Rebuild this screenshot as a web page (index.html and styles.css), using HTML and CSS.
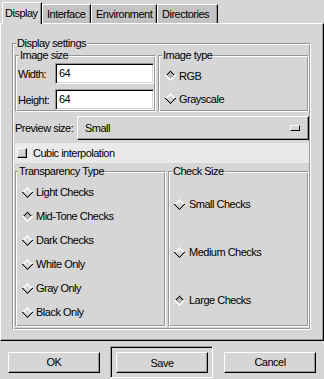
FILE: index.html
```html
<!DOCTYPE html>
<html lang="en">
<head>
    <meta charset="UTF-8">
    <title>Preferences</title>
    <link rel="stylesheet" href="styles.css">
</head>
<body>
    <svg class="defs" width="0" height="0" aria-hidden="true">
        <symbol id="dia-off" viewBox="0 0 11 11">
            <polygon points="5.5,1 10,5.5 5.5,10 1,5.5" fill="#d6d6d6"/>
            <path d="M0.5 5.5 L5.5 0.5 L10.5 5.5" stroke="#fff" fill="none"/>
            <path d="M1.5 5.5 L5.5 1.5 L9.5 5.5" stroke="#fff" fill="none"/>
            <path d="M1.5 5.5 L5.5 9.5 L9.5 5.5" stroke="#969696" fill="none"/>
            <path d="M0.5 5.5 L5.5 10.5 L10.5 5.5" stroke="#000" fill="none"/>
        </symbol>
        <symbol id="dia-on" viewBox="0 0 11 11">
            <polygon points="5.5,1 10,5.5 5.5,10 1,5.5" fill="#b4b4b4"/>
            <path d="M0.5 5.5 L5.5 0.5 L10.5 5.5" stroke="#969696" fill="none"/>
            <path d="M1.5 5.5 L5.5 1.5 L9.5 5.5" stroke="#000" fill="none"/>
            <path d="M1.5 5.5 L5.5 9.5 L9.5 5.5" stroke="#fff" fill="none"/>
            <path d="M0.5 5.5 L5.5 10.5 L10.5 5.5" stroke="#fff" fill="none"/>
        </symbol>
    </svg>

    <div class="tabs">
        <div class="tab active tab-display">Display</div>
        <div class="tab tab-interface">Interface</div>
        <div class="tab tab-environment">Environment</div>
        <div class="tab tab-directories">Directories</div>
    </div>

    <div class="page">
        <fieldset class="frame settings">
            <legend>Display settings</legend>

            <div class="row-top">
                <fieldset class="frame image-size">
                    <legend>Image size</legend>
                    <div class="size-grid">
                        <span>Width:</span>
                        <span class="entry">64</span>
                        <span>Height:</span>
                        <span class="entry">64</span>
                    </div>
                </fieldset>
                <fieldset class="frame image-type">
                    <legend>Image type</legend>
                    <div class="opt"><svg class="dia"><use href="#dia-on"/></svg>RGB</div>
                    <div class="opt"><svg class="dia"><use href="#dia-off"/></svg>Grayscale</div>
                </fieldset>
            </div>

            <div class="preview">
                <span class="preview-label">Preview size:</span>
                <div class="combo">
                    <span>Small</span>
                    <span class="combo-mark"></span>
                </div>
            </div>

            <div class="cubic">
                <span class="check"></span>
                <span>Cubic interpolation</span>
            </div>

            <div class="row-bottom">
                <fieldset class="frame transparency">
                    <legend>Transparency Type</legend>
                    <div class="opt"><svg class="dia"><use href="#dia-off"/></svg>Light Checks</div>
                    <div class="opt"><svg class="dia"><use href="#dia-on"/></svg>Mid-Tone Checks</div>
                    <div class="opt"><svg class="dia"><use href="#dia-off"/></svg>Dark Checks</div>
                    <div class="opt"><svg class="dia"><use href="#dia-off"/></svg>White Only</div>
                    <div class="opt"><svg class="dia"><use href="#dia-off"/></svg>Gray Only</div>
                    <div class="opt"><svg class="dia"><use href="#dia-off"/></svg>Black Only</div>
                </fieldset>
                <fieldset class="frame check-size">
                    <legend>Check Size</legend>
                    <div class="opt"><svg class="dia"><use href="#dia-off"/></svg>Small Checks</div>
                    <div class="opt"><svg class="dia"><use href="#dia-off"/></svg>Medium Checks</div>
                    <div class="opt"><svg class="dia"><use href="#dia-on"/></svg>Large Checks</div>
                </fieldset>
            </div>
        </fieldset>
    </div>

    <div class="actions">
        <button class="btn btn-ok">OK</button>
        <div class="default">
            <button class="btn">Save</button>
        </div>
        <button class="btn">Cancel</button>
    </div>
</body>
</html>
```

FILE: styles.css
```css
/* GTK 1.x look: #d6d6d6 face, white light, #969696 dark */
body {
    margin: 0;
    width: 324px;
    height: 379px;
    overflow: hidden;
    background: #d6d6d6;
    color: #000;
    font-family: "Liberation Sans", Arial, sans-serif;
    font-size: 11px;
    letter-spacing: -0.5px;
    line-height: 14px;
}

.defs {
    position: absolute;
}

/* Notebook tabs */
.tabs {
    display: flex;
    align-items: flex-end;
    height: 23px;
    padding-left: 2px;
    box-sizing: border-box;
    position: relative;
    z-index: 1;
}

.tab {
    box-sizing: border-box;
    height: 19px;
    padding: 2px 0 0 4px;
    background: #c3c3c3;
    border-left: 1px solid #fff;
    border-top: 1px solid #fff;
    border-right: 1px solid #000;
    box-shadow: inset -1px 0 #969696;
    white-space: nowrap;
}

.tab.active {
    height: 22px;
    margin-bottom: -1px;
    padding-top: 3px;
    padding-left: 2px;
    background: #d6d6d6;
}

.tab-display { width: 40px; }
.tab-interface { width: 49px; }
.tab-environment { width: 66px; }
.tab-directories { width: 61px; }

.page {
    box-sizing: border-box;
    height: 318px;
    padding: 13px 0 0 11px;
    border: 1px solid;
    border-color: #fff #000 #000 #fff;
    box-shadow: inset -1px -1px #969696;
}

/* Etched frames */
.frame {
    margin: 0;
    padding: 0;
    min-width: 0;
    border: 1px solid;
    border-color: #969696 #fff #fff #969696;
    box-shadow: inset 1px 1px #fff, inset -1px -1px #969696;
}

.frame > legend {
    margin-left: 2px;
    padding: 0 1px;
    line-height: 12px;
    background: #d6d6d6;
    white-space: nowrap;
}

.settings {
    box-sizing: border-box;
    width: 299px;
    padding: 0 1px 2px 2px;
}

.settings > legend,
.image-size > legend,
.transparency > legend {
    margin-left: 1px;
}

.row-top {
    display: grid;
    grid-template-columns: 141px 1fr;
    column-gap: 2px;
}

.image-size {
    padding: 2px 1px 1px 2px;
}

.size-grid {
    display: grid;
    grid-template-columns: 37px 99px;
    row-gap: 5px;
    align-items: center;
}

.entry {
    box-sizing: border-box;
    height: 21px;
    padding-left: 3px;
    line-height: 19px;
    background: #fff;
    border: 1px solid;
    border-color: #969696 #fff #fff #969696;
    box-shadow: inset 1px 1px #000, inset -1px -1px #d6d6d6;
}

.image-type {
    padding: 3px 1px 1px 1px;
}

.image-type .opt {
    height: 23px;
    padding-left: 5px;
}

.opt {
    display: flex;
    align-items: center;
    white-space: nowrap;
}

.dia {
    width: 11px;
    height: 11px;
    margin-right: 3px;
    flex: none;
    shape-rendering: crispEdges;
}

/* Preview size option menu */
.preview {
    display: flex;
    align-items: center;
    height: 24px;
    margin-top: 4px;
}

.preview-label {
    width: 62px;
    flex: none;
    white-space: nowrap;
}

.combo {
    flex: 1;
    box-sizing: border-box;
    height: 24px;
    display: flex;
    align-items: center;
    justify-content: space-between;
    padding-left: 7px;
    border: 1px solid;
    border-color: #fff #000 #000 #fff;
    box-shadow: inset -1px -1px #969696;
}

.combo-mark {
    box-sizing: border-box;
    width: 10px;
    height: 6px;
    margin-right: 8px;
    border: 1px solid;
    border-color: #fff #000 #000 #fff;
}

.cubic {
    display: flex;
    align-items: center;
    height: 20px;
    margin-top: 3px;
    padding-left: 2px;
    background: #eaeaea;
}

.check {
    box-sizing: border-box;
    width: 10px;
    height: 10px;
    margin-right: 6px;
    background: #d6d6d6;
    border: 1px solid;
    border-color: #fff #000 #000 #fff;
    box-shadow: inset -1px -1px #969696;
}

.row-bottom {
    display: grid;
    grid-template-columns: 151px 1fr;
    column-gap: 2px;
    margin-top: 2px;
}

.transparency {
    padding: 3px 1px 2px 1px;
}

.transparency .opt {
    height: 24px;
    padding-left: 5px;
}

.check-size {
    padding: 3px 1px 2px 1px;
}

.check-size .opt {
    height: 48px;
    padding-left: 4px;
}

.check-size .dia {
    margin-right: 4px;
}

/* Dialog buttons */
.actions {
    display: flex;
    align-items: center;
    box-sizing: border-box;
    height: 38px;
    padding: 5px 0 1px 8px;
}

.btn {
    box-sizing: border-box;
    width: 92px;
    height: 21px;
    margin: 0;
    padding: 0;
    font: inherit;
    letter-spacing: inherit;
    color: #000;
    background: #d6d6d6;
    border: 1px solid;
    border-color: #fff #000 #000 #fff;
    box-shadow: inset -1px -1px #969696;
}

.btn-ok {
    margin-right: 10px;
}

.default {
    display: flex;
    margin-right: 11px;
    padding: 5px 4px 4px 5px;
    border: 1px solid;
    border-color: #969696 #fff #fff #969696;
    box-shadow: inset 1px 1px #000;
}
```
